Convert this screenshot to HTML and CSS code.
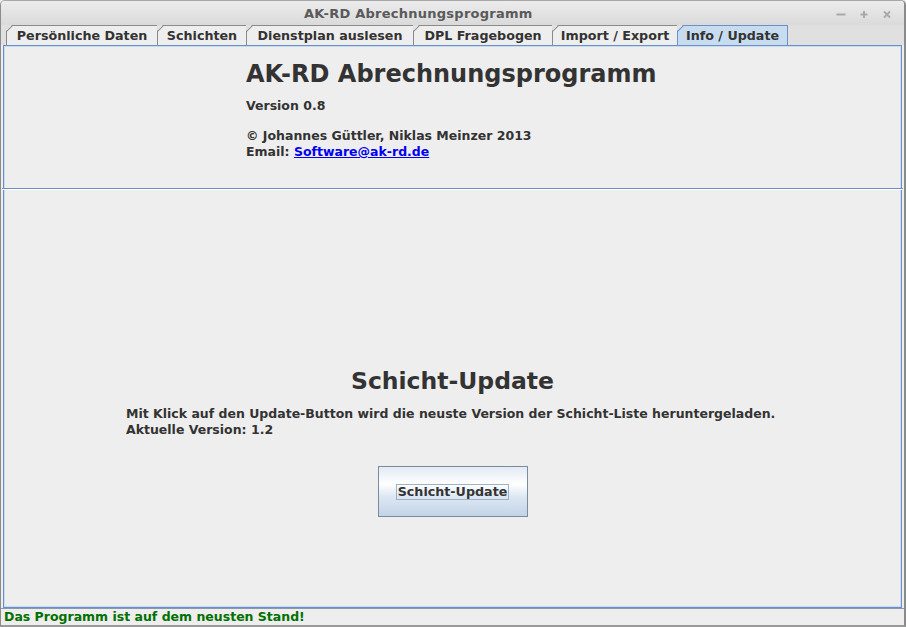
FILE: index.html
```html
<!DOCTYPE html>
<html lang="de">
<head>
<meta charset="utf-8">
<title>AK-RD Abrechnungsprogramm</title>
<link rel="stylesheet" href="styles.css">
</head>
<body>
<div class="window">
  <div class="titlebar">
    <span class="title">AK-RD Abrechnungsprogramm</span>
    <div class="controls">
      <svg class="ctl" width="10" height="10" viewBox="0 0 10 10"><path d="M0.5 5.5h9" stroke="#a9a9a9" stroke-width="2"/></svg>
      <svg class="ctl" width="10" height="10" viewBox="0 0 10 10"><path d="M1.5 5.5h7M5 2v7" stroke="#a9a9a9" stroke-width="2"/></svg>
      <svg class="ctl" width="10" height="10" viewBox="0 0 10 10"><path d="M2 2.5l6 6M8 2.5l-6 6" stroke="#a9a9a9" stroke-width="1.8"/></svg>
    </div>
  </div>
  <div class="tabs">
    <div class="tab t1">Persönliche Daten</div>
    <div class="tab t2">Schichten</div>
    <div class="tab t3">Dienstplan auslesen</div>
    <div class="tab t4">DPL Fragebogen</div>
    <div class="tab t5">Import / Export</div>
    <div class="tab t6 active">Info / Update</div>
  </div>
  <div class="panel">
    <div class="info">
      <h1 class="app-title">AK-RD Abrechnungsprogramm</h1>
      <p class="line version">Version 0.8</p>
      <p class="line">© Johannes Güttler, Niklas Meinzer 2013</p>
      <p class="line">Email: <a class="mail" href="#">Software@ak-rd.de</a></p>
    </div>
    <div class="sep"></div>
    <div class="update">
      <h2 class="upd-title">Schicht-Update</h2>
      <div class="upd-text">
        <p class="line">Mit Klick auf den Update-Button wird die neuste Version der Schicht-Liste heruntergeladen.</p>
        <p class="line">Aktuelle Version: 1.2</p>
      </div>
      <div class="btn-row">
        <button class="btn"><span class="focus">Schicht-Update</span></button>
      </div>
    </div>
  </div>
  <div class="status">Das Programm ist auf dem neusten Stand!</div>
</div>
</body>
</html>
```
FILE: styles.css
```css
* { box-sizing: border-box; }
html, body {
  margin: 0;
  padding: 0;
  background: #eeeeee;
}
body {
  font-family: "DejaVu Sans", sans-serif;
  font-weight: bold;
  font-size: 12.5px;
  color: #333333;
}
.window {
  width: 906px;
  height: 627px;
  border: 1px solid #8c8c8c;
  border-top-color: #a8a8a8;
  border-radius: 5px 5px 0 0;
  border-right: 2px solid #8a8a8a;
  border-bottom: 2px solid #9a9a9a;
  background: #eeeeee;
  display: flex;
  flex-direction: column;
  overflow: hidden;
}
.titlebar {
  height: 24px;
  flex: none;
  background: linear-gradient(#ececec, #dadada);
  display: flex;
  align-items: center;
  padding-left: 303px;
  padding-right: 12px;
}
.title {
  font-size: 13px;
  color: #5a5a5a;
  letter-spacing: 0.25px;
}
.controls {
  margin-left: auto;
  display: flex;
  align-items: center;
  gap: 13px;
  padding-top: 1px;
}
.ctl { display: block; }
.tabs {
  height: 20px;
  flex: none;
  display: flex;
  padding-left: 5px;
  background: #e0e0e0;
}
.tab {
  position: relative;
  height: 20px;
  border: 1px solid #8a8a8a;
  border-bottom: none;
  border-right: none;
  padding: 1px 0 0 0;
  text-align: center;
  background: #eeeeee;
  line-height: 17px;
  font-size: 12.7px;
  color: #333333;
  clip-path: polygon(6px 0, 100% 0, 100% 100%, 0 100%, 0 6px);
}
.tab::before {
  content: "";
  position: absolute;
  left: -2px;
  top: 2px;
  width: 9px;
  height: 1px;
  background: #8a8a8a;
  transform: rotate(-45deg);
}
.t1 { width: 151px; }
.t2 { width: 89px; }
.t3 { width: 167px; }
.t4 { width: 139px; }
.t5 { width: 125px; }
.t6 { width: 111px; border-right: 1px solid #6a8fcb; }
.tab.active {
  background: #c8dcf0;
  border-color: #6a8fcb;
}
.tab.active::before { background: #6a8fcb; }
.panel {
  flex: none;
  height: 563px;
  margin: 0 2px 0 2px;
  border: 1px solid #6a8fcb;
  box-shadow: inset 0 0 0 1px #c8dcf0;
  background: #eeeeee;
  display: flex;
  flex-direction: column;
}
.info {
  height: 142px;
  padding: 13px 0 0 242px;
}
.app-title {
  margin: 0;
  font-size: 24px;
  line-height: 30px;
  color: #333333;
}
.line {
  margin: 0;
  line-height: 16px;
}
.version {
  margin: 9px 0 14px;
}
.mail {
  color: #0000ee;
  text-decoration: underline;
}
.sep {
  height: 2px;
  margin: 0 -2px;
  border-top: 1px solid #6a8fcb;
  background: #ffffff;
  flex: none;
}
.update {
  flex: 1;
  display: flex;
  flex-direction: column;
  padding-top: 176px;
}
.upd-title {
  margin: 0;
  text-align: center;
  font-size: 23.5px;
  line-height: 30px;
  color: #333333;
}
.upd-text {
  padding-left: 122px;
  margin-top: 10px;
}
.btn-row {
  display: flex;
  justify-content: center;
  padding-top: 28px;
}
.btn {
  width: 150px;
  height: 51px;
  border: 1px solid #7a8a9f;
  background: linear-gradient(#e2eaf3 0%, #ffffff 35%, #dde7f2 60%, #c3d4e8 100%);
  font-family: "DejaVu Sans", sans-serif;
  font-weight: bold;
  font-size: 12.7px;
  color: #333333;
  padding: 0;
  display: flex;
  align-items: center;
  justify-content: center;
}
.focus {
  border: 1px solid #9bb2cc;
  padding: 0 1px;
  line-height: 14px;
}
.status {
  flex: none;
  padding: 0 0 0 3px;
  color: #007000;
  line-height: 16px;
  border-top: 1px solid #8a9aae;
  margin-top: 0;
}
```
